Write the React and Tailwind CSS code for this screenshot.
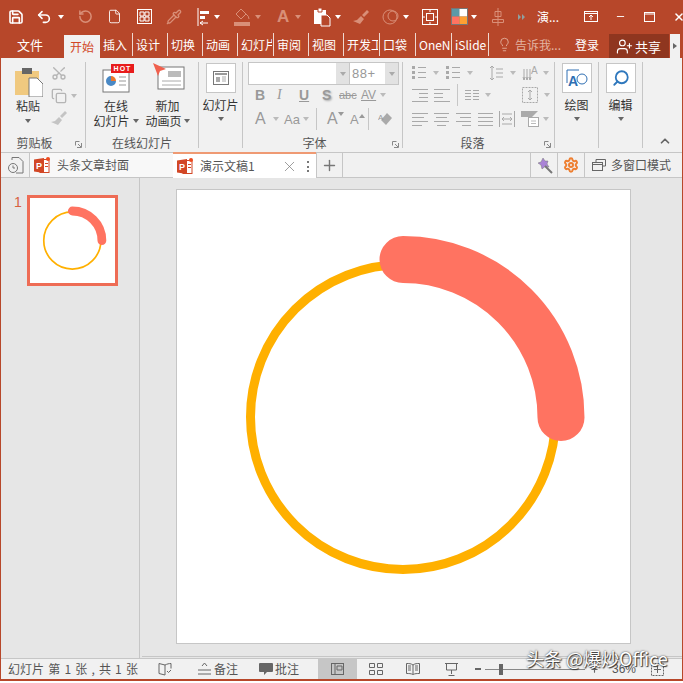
import { Save, Undo2, RotateCw, File, Pipette, X, Plus, Minus, Lightbulb, UserPlus, ChevronUp, Settings, Copy, Scissors, Search } from "lucide-react";

const tabs = [
  ["插入", 33], ["设计", 35], ["切换", 35], ["动画", 35], ["幻灯片", 36], ["审阅", 35], ["视图", 35],
  ["开发工具", 36], ["口袋", 36], ["OneNote", 36], ["iSlide", 37],
];

function Caret({ color = "#fff", className = "" }) {
  return (
    <svg width="6" height="4" viewBox="0 0 6 4" className={`shrink-0 ${className}`}>
      <path d="M0 0h6L3 4z" fill={color} />
    </svg>
  );
}

function Gap({ w }) {
  return <div className="shrink-0" style={{ width: w }} />;
}

// grey stacked lines used all over the paragraph group
function Lines({ rows, w = 16, color = "#a9a9a9", dots = false }) {
  const h = 16;
  return (
    <svg width={w} height={h} viewBox={`0 0 ${w} ${h}`} className="shrink-0">
      {rows.map((r, i) => (
        <g key={i}>
          {dots && <rect x="0" y={r[0] - 1} width="3" height="3" fill={color} />}
          <rect x={r[1]} y={r[0]} width={r[2]} height="1" fill={color} />
        </g>
      ))}
    </svg>
  );
}

function PptLogo() {
  return (
    <svg width="17" height="17" viewBox="0 0 17 17" className="shrink-0">
      <rect x="6" y="2.500" width="9" height="13" fill="#fff" stroke="#d24726" />
      <path d="M0 2.500 10 1v15L0 14.500z" fill="#d24726" />
      <text x="2" y="12" fontSize="9" fontWeight="700" fill="#fff" fontFamily="Liberation Sans">P</text>
      <rect x="11" y="6" width="3" height="1" fill="#d24726" />
      <rect x="11" y="9" width="3" height="1" fill="#d24726" />
      <circle cx="14" cy="2" r="2" fill="#ee4b1f" />
    </svg>
  );
}

function Arcs({ size }) {
  return (
    <svg width={size} height={size} viewBox="0 0 454 454" className="block">
      <circle cx="226" cy="227" r="152.500" fill="none" stroke="#ffb000" strokeWidth="9" />
      <path d="M226 69.500A158 158 0 0 1 384 227.500" fill="none" stroke="#ff7361" strokeWidth="47" strokeLinecap="round" />
    </svg>
  );
}

function TitleBar() {
  return (
    <div className="h-[33px] -mr-[1px] overflow-hidden flex items-center text-white">
      <Gap w={7} />
      <Save size={16} strokeWidth={2.4} className="shrink-0" />
      <Gap w={12} />
      <Undo2 size={16} strokeWidth={2.4} className="shrink-0" />
      <Caret className="ml-[6px]" />
      <Gap w={14} />
      <RotateCw size={15} strokeWidth={2.4} className="shrink-0 text-[#d98f78] -scale-x-100" />
      <Gap w={14} />
      <File size={15} strokeWidth={1.4} className="shrink-0" />
      <Gap w={15} />
      <svg width="15" height="15" viewBox="0 0 15 15" className="shrink-0" fill="none" stroke="#fff">
        <rect x=".5" y=".5" width="14" height="14" />
        <path d="M3 3h4v4H3zM8 3h4v4H8zM3 8h4v4H3zM8 8h4v4H8z" />
      </svg>
      <Gap w={14} />
      <Pipette size={16} className="shrink-0 text-[#d98f78]" />
      <Gap w={15} />
      <svg width="14" height="18" viewBox="0 0 14 18" className="shrink-0">
        <path d="M1 0v18" stroke="#fff" />
        <path d="M3 3h9v3H3zM3 8h5v3H3z" fill="#fff" />
        <path d="M3 15h8M3 15l3-2M3 15l3 2" stroke="#fff" fill="none" />
      </svg>
      <Caret className="ml-[3px]" />
      <Gap w={14} />
      <svg width="17" height="18" viewBox="0 0 17 18" className="shrink-0" fill="#d98f78">
        <path d="M7 1 12 6 7 11 2 6z" fill="none" stroke="#d98f78" />
        <path d="M12 6q3 2 3 5" fill="none" stroke="#d98f78" />
        <rect x="0" y="14" width="16" height="4" />
      </svg>
      <Caret color="#d98f78" className="ml-[4px]" />
      <Gap w={16} />
      <span className="shrink-0 w-[12px] text-[17px] leading-none font-bold font-['Liberation_Sans',sans-serif] text-[#d98f78]">A</span>
      <Caret color="#d98f78" className="ml-[6px]" />
      <Gap w={13} />
      <svg width="17" height="20" viewBox="0 0 17 20" className="shrink-0">
        <path d="M0 3h12v14H0z" fill="#fff" />
        <path d="M4 1h4v4H4z" fill="#fff" stroke="#b7472a" />
        <path d="M7 8h6l3 3v8H7z" fill="#b7472a" stroke="#fff" />
      </svg>
      <Caret className="ml-[4px]" />
      <Gap w={12} />
      <svg width="16" height="14" viewBox="0 0 16 14" className="shrink-0">
        <path d="M9 5 14 0l2 2-5 5zM8 6l3 3-4 5-7-3 4-1z" fill="#d98f78" />
      </svg>
      <Gap w={13} />
      <svg width="18" height="16" viewBox="0 0 18 16" className="shrink-0" fill="none" stroke="#d98f78">
        <circle cx="8" cy="8" r="7" />
        <circle cx="11" cy="7" r="5" />
      </svg>
      <Caret className="ml-[3px]" />
      <Gap w={13} />
      <svg width="16" height="16" viewBox="0 0 16 16" className="shrink-0" fill="none" stroke="#fff">
        <rect x=".5" y=".5" width="15" height="15" />
        <rect x="4.500" y="4.500" width="7" height="7" />
        <path d="M8 1v2M8 13v2M1 8h2M13 8h2" />
      </svg>
      <Gap w={13} />
      <svg width="17" height="17" viewBox="0 0 17 17" className="shrink-0">
        <rect width="17" height="17" fill="#777" />
        <rect x="1" y="1" width="7.500" height="7.500" fill="#5b9aa8" />
        <rect x="8.500" y="1" width="7.500" height="7.500" fill="#fff" />
        <rect x="1" y="8.500" width="7.500" height="7.500" fill="#ff7361" />
        <rect x="8.500" y="8.500" width="7.500" height="7.500" fill="#ffa033" />
      </svg>
      <Caret className="ml-[3px]" />
      <Gap w={15} />
      <svg width="12" height="18" viewBox="0 0 12 18" className="shrink-0" fill="none" stroke="#d98f78">
        <path d="M6 0v18M3 3.500h6v5H3zM.5 11.500h11v3H.5z" />
      </svg>
      <Gap w={14} />
      <svg width="8" height="6" viewBox="0 0 8 6" className="shrink-0"><path d="M0 0l3 3-3 3zM4 0l3 3-3 3z" fill="#8fa0a0" /></svg>
      <Gap w={11} />
      <span className="shrink-0 text-[12px] font-['Noto_Sans_CJK_SC',sans-serif] whitespace-nowrap w-[30px]">演...</span>
      <Gap w={17} />
      <svg width="14" height="11" viewBox="0 0 14 11" className="shrink-0" fill="none" stroke="#fff">
        <rect x=".5" y=".5" width="13" height="10" />
        <path d="M.5 2.500h13M7 9V4M5 6l2-2 2 2" />
      </svg>
      <Gap w={17} />
      <Minus size={11} strokeWidth={2} className="shrink-0" />
      <Gap w={18} />
      <svg width="11" height="10" viewBox="0 0 11 10" className="shrink-0" fill="none" stroke="#fff">
        <rect x=".5" y=".5" width="10" height="9" />
        <path d="M0 2h11" />
      </svg>
      <Gap w={18} />
      <X size={12} strokeWidth={3} className="shrink-0" />
    </div>
  );
}

function TabRow() {
  return (
    <div className="h-[25px] flex items-end text-white text-[12px] leading-none font-['Noto_Sans_CJK_SC',sans-serif]">
      <div className="shrink-0 w-[63px] h-[25px] pl-[16px] pb-[2px] flex items-center text-[13px]">文件</div>
      <div className="shrink-0 w-[36px] h-[23px] bg-[#f1f1f1] text-[#d24726] flex items-center justify-center">开始</div>
      <div className="shrink-0 flex h-[25px] pb-[2px]">
        {tabs.map(([name, w]) => (
          <div key={name} style={{ width: w }} className="h-[23px] pl-[3px] pr-[1px] border-r border-[#efd8d0] flex items-center overflow-hidden whitespace-nowrap">
            <span className="block overflow-hidden w-full">{name}</span>
          </div>
        ))}
      </div>
      <div className="shrink-0 w-[74px] h-[25px] pb-[2px] flex items-center pl-[8px] text-[#e3b3a1] overflow-hidden">
        <Lightbulb size={15} strokeWidth={1.4} className="shrink-0" />
        <span className="ml-[3px] whitespace-nowrap">告诉我...</span>
      </div>
      <div className="shrink-0 h-[25px] pb-[2px] flex items-center w-[46px] pl-[12px] whitespace-nowrap">登录</div>
      <div className="shrink-0 h-[24px] w-[60px] bg-[#8f361f] flex items-center pl-[7px] gap-[2px] whitespace-nowrap">
        <UserPlus size={17} strokeWidth={1.6} className="shrink-0" />
        <span className="text-[13px]">共享</span>
      </div>
      <div className="shrink-0 h-[24px] w-[10px] ml-[1px] bg-[#f1f1f1] flex items-center justify-center">
        <span className="border-l-[4px] border-y-[3px] border-y-transparent border-l-[#666]" />
      </div>
    </div>
  );
}

function Group({ w, label, labelPr = 0, launcher, children }) {
  return (
    <div style={{ width: w }} className="shrink-0 relative flex flex-col h-[86px] border-r border-[#c6c6c6]">
      <div className="flex-1 min-h-0 flex">{children}</div>
      <div style={{ paddingRight: labelPr }} className="h-[16px] -mb-[3px] text-center text-[12px] leading-[16px] text-[#555] font-['Noto_Sans_CJK_SC',sans-serif]">{label}</div>
      {launcher && (
        <svg width="7" height="7" viewBox="0 0 7 7" className="absolute right-[3px] bottom-[0px]" fill="none" stroke="#888">
          <path d="M.5 .5h4M.5 .5v4M6.500 2v4.500H2M3 3l3 3" />
        </svg>
      )}
    </div>
  );
}

function RibbonLabel({ children }) {
  return <div className="text-[12px] leading-[15px] text-[#333] text-center whitespace-nowrap font-['Noto_Sans_CJK_SC',sans-serif]">{children}</div>;
}

function FontGroup() {
  const gray = "shrink-0 text-[#999] font-['Liberation_Sans',sans-serif] leading-none";
  return (
    <div className="pl-[5px] w-full">
      <div className="flex w-[151px] h-[23px] border border-[#c6c6c6]">
        <div className="w-[87px] bg-white" />
        <div className="w-[13px] bg-[#e2e2e2] flex items-center justify-center"><Caret color="#aaa" /></div>
        <div className="w-[1px] bg-[#c6c6c6]" />
        <div className="w-[35px] bg-white text-[13px] tracking-[0.5px] leading-[21px] pl-[2px] text-[#999] font-['Liberation_Sans',sans-serif]">88+</div>
        <div className="flex-1 bg-[#e2e2e2] flex items-center justify-center"><Caret color="#aaa" /></div>
      </div>
      <div className="flex items-center h-[20px] pl-[7px]">
        <span className={`w-[22px] text-[14px] font-bold ${gray}`}>B</span>
        <span className="shrink-0 w-[22px] text-[14px] leading-none italic font-['Liberation_Serif',serif] text-[#999]">I</span>
        <span className={`w-[23px] text-[14px] underline font-bold ${gray}`}>U</span>
        <span className={`w-[17px] text-[14px] font-bold [text-shadow:1px_1px_2px_#aaa] ${gray}`}>S</span>
        <span className={`w-[22px] text-[11px] line-through ${gray}`}>abc</span>
        <span className={`w-[19px] text-[12px] underline ${gray}`}>AV</span>
        <Caret color="#bbb" />
      </div>
      <div className="flex items-center h-[28px] pl-[7px]">
        <span className={`w-[18px] text-[16px] ${gray}`}>A</span>
        <Caret color="#bbb" />
        <span className={`w-[19px] ml-[5px] text-[13px] ${gray}`}>Aa</span>
        <Caret color="#bbb" />
        <div className="shrink-0 w-[1px] h-[22px] bg-[#c6c6c6] ml-[7px]" />
        <div className={`flex items-start w-[23px] ml-[10px] text-[16px] ${gray}`}>A<Caret color="#999" className="mt-[1px]" /></div>
        <div className={`flex items-start w-[18px] text-[13px] ${gray}`}>A<Caret color="#999" className="rotate-180 mt-[1px]" /></div>
        <div className="shrink-0 w-[1px] h-[22px] bg-[#c6c6c6]" />
        <svg width="15" height="14" viewBox="0 0 15 14" className="ml-[9px] shrink-0">
          <path d="M9 1l5 5-6 7-5-5z" fill="#aaa" />
          <text x="0" y="8" fontSize="8" fill="#999" fontFamily="Liberation Sans">A</text>
        </svg>
      </div>
    </div>
  );
}

function ParaCell({ w, children, caret, gap = 7 }) {
  return (
    <div style={{ width: w, gap }} className="shrink-0 flex items-center justify-start">
      {children}
      {caret && <Caret color="#bbb" />}
    </div>
  );
}

function ParagraphGroup() {
  const even = [[2, 0, 16], [6, 0, 12], [10, 0, 16], [14, 0, 10]];
  const center = [[2, 0, 15], [6, 2, 11], [10, 0, 15], [14, 3, 9]];
  const right = [[2, 0, 15], [6, 4, 11], [10, 0, 15], [14, 6, 9]];
  const full = [[2, 0, 16], [6, 0, 16], [10, 0, 16], [14, 0, 16]];
  const list = [[2, 6, 8], [7, 6, 8], [12, 6, 8]];
  return (
    <div className="pl-[9px] w-full flex flex-col">
      <div className="flex h-[22px]">
        <ParaCell w={34} caret><Lines dots w={14} rows={list} /></ParaCell>
        <ParaCell w={43} caret><Lines dots w={14} rows={list} /></ParaCell>
        <ParaCell w={33} caret>
          <svg width="14" height="16" viewBox="0 0 14 16" fill="none" stroke="#a9a9a9" className="shrink-0">
            <path d="M3 1v14M1 3l2-2 2 2M1 13l2 2 2-2M7 4h7M7 8h7M7 12h7" />
          </svg>
        </ParaCell>
        <ParaCell w={30} caret gap={5}>
          <svg width="16" height="16" viewBox="0 0 16 16" fill="none" stroke="#a9a9a9" className="shrink-0">
            <path d="M2 4v11M5 4v11M8 4v11M1 12l1 3 1-3M4 12l1 3 1-3M7 12l1 3 1-3" />
            <text x="9" y="9" fontSize="10" fill="#a9a9a9" stroke="none" fontFamily="Liberation Sans">A</text>
          </svg>
        </ParaCell>
      </div>
      <div className="flex h-[22px]">
        <ParaCell w={22}><Lines rows={[[2, 0, 16], [6, 7, 9], [10, 7, 9], [14, 0, 16]]} /></ParaCell>
        <ParaCell w={23}><Lines rows={[[2, 0, 16], [6, 0, 9], [10, 0, 9], [14, 0, 16]]} /></ParaCell>
        <div className="shrink-0 w-[1px] h-[22px] bg-[#c6c6c6] mr-[7px]" />
        <ParaCell w={57} caret gap={6}>
          <Lines w={14} rows={[[3, 0, 6], [6, 0, 6], [9, 0, 6], [12, 0, 6], [3, 8, 6], [6, 8, 6], [9, 8, 6], [12, 8, 6]]} />
        </ParaCell>
        <ParaCell w={30} caret gap={6}>
          <svg width="16" height="16" viewBox="0 0 16 16" fill="none" stroke="#a9a9a9" strokeDasharray="2 1" className="shrink-0">
            <rect x=".5" y=".5" width="15" height="15" />
            <path d="M8 3v10M6 5l2-2 2 2M6 11l2 2 2-2" strokeDasharray="none" />
          </svg>
        </ParaCell>
      </div>
      <div className="flex h-[26px]">
        <ParaCell w={22}><Lines rows={even} /></ParaCell>
        <ParaCell w={22}><Lines rows={center} w={15} /></ParaCell>
        <ParaCell w={22}><Lines rows={right} w={15} /></ParaCell>
        <ParaCell w={21}><Lines rows={full} w={15} /></ParaCell>
        <ParaCell w={22}>
          <svg width="16" height="16" viewBox="0 0 16 16" fill="none" stroke="#a9a9a9" className="shrink-0">
            <path d="M.5 0v16M15.500 0v16M3 3h10M3 13h10M3 8h10M3 8l2-2M3 8l2 2M13 8l-2-2M13 8l-2 2" />
          </svg>
        </ParaCell>
        <ParaCell w={30} caret gap={3}>
          <svg width="19" height="16" viewBox="0 0 19 16" className="shrink-0">
            <path d="M0 0h17l-6 6H0z" fill="#aaa" />
            <rect x="7.500" y="6.500" width="10" height="9" fill="#fff" stroke="#aaa" />
            <path d="M10 10h5M10 12.500h5" stroke="#bbb" />
          </svg>
        </ParaCell>
      </div>
    </div>
  );
}

function BigButton({ label, children }) {
  return (
    <div className="w-full flex flex-col items-center pt-[1px]">
      <div className="w-[30px] h-[30px] border border-[#c6c6c6] bg-white flex items-center justify-center">{children}</div>
      <div className="mt-[4px]"><RibbonLabel>{label}</RibbonLabel></div>
      <Caret color="#666" className="mt-[5px]" />
    </div>
  );
}

function Ribbon() {
  return (
    <div className="h-[94px] bg-[#f1f1f1] flex items-start pt-[4px] pl-[1px]">
      <Group w={84} label="剪贴板" labelPr={18} launcher>
        <div className="w-[52px] shrink-0 flex flex-col items-center pt-[5px]">
          <svg width="29" height="30" viewBox="0 0 29 30" className="shrink-0">
            <path d="M1 4h24v24H1z" fill="#f0c97f" />
            <rect x="8" y="1" width="10" height="6" fill="#666" />
            <path d="M15 11h8l6 6v13H15z" fill="#fff" stroke="#777" />
          </svg>
          <div className="mt-[1px]"><RibbonLabel>粘贴</RibbonLabel></div>
          <Caret color="#666" className="mt-[6px]" />
        </div>
        <div className="-ml-[3px] flex flex-col pt-[3px] gap-[7px] text-[#b5b5b5]">
          <Scissors size={16} className="-rotate-90" />
          <div className="flex items-center gap-[4px]"><Copy size={16} /><Caret color="#bbb" /></div>
          <svg width="16" height="14" viewBox="0 0 16 14"><path d="M9 5 14 0l2 2-5 5zM8 6l3 3-4 5-7-3 4-1z" fill="#c4c4c4" /></svg>
        </div>
      </Group>
      <Group w={113} label="在线幻灯片">
        <div className="w-[60px] shrink-0 flex flex-col items-center pt-[1px]">
          <div className="relative w-[28px] h-[30px] mt-[1px]">
            <svg width="28" height="30" viewBox="0 0 28 30" className="block">
              <rect x="1" y="6" width="26" height="22" fill="#fff" stroke="#777" />
              <path d="M9 12a5 5 0 1 0 5 5h-5z" fill="#4a89c5" />
              <path d="M9 12a5 5 0 0 1 5 5H9z" fill="#e9772e" />
              <path d="M17 13h7M17 17h7M17 21h7" stroke="#999" />
            </svg>
            <span className="absolute -right-[4px] top-0 h-[9px] w-[23px] bg-[#e81c1c] text-white text-[7px] leading-[9px] text-center font-bold tracking-[1px] font-['Liberation_Sans',sans-serif]">HOT</span>
          </div>
          <div className="mt-[4px]">
            <RibbonLabel>在线</RibbonLabel>
            <div className="flex items-center gap-[3px]"><RibbonLabel>幻灯片</RibbonLabel><Caret color="#666" /></div>
          </div>
        </div>
        <div className="w-[53px] shrink-0 -ml-[5px] flex flex-col items-center pt-[1px]">
          <svg width="32" height="31" viewBox="0 0 32 31" className="ml-[2px]">
            <rect x="5" y="4" width="26" height="22" fill="#fff" stroke="#777" />
            <rect x="15" y="8" width="13" height="6" fill="#bbb" />
            <path d="M9 18h19M9 22h19" stroke="#aaa" />
            <path d="M0 0 13 6 7 8 5 13z" fill="#f0604d" />
          </svg>
          <div className="mt-[4px]">
            <RibbonLabel>新加</RibbonLabel>
            <div className="flex items-center gap-[2px]"><RibbonLabel>动画页</RibbonLabel><Caret color="#666" /></div>
          </div>
        </div>
      </Group>
      <Group w={44} label="">
        <BigButton label="幻灯片">
          <svg width="16" height="14" viewBox="0 0 16 14"><rect x=".5" y=".5" width="15" height="13" fill="#fff" stroke="#777" /><path d="M2 2h12v2H2z" fill="#999" /><path d="M3 6h4v5H3z" fill="#aaa" /><path d="M9 6h4M9 8h4M9 10h4" stroke="#aaa" /></svg>
        </BigButton>
      </Group>
      <Group w={160} label="字体" labelPr={16} launcher><FontGroup /></Group>
      <Group w={152} label="段落" labelPr={12} launcher><ParagraphGroup /></Group>
      <Group w={44} label="">
        <BigButton label="绘图">
          <svg width="22" height="20" viewBox="0 0 22 20" fill="none">
            <path d="M1 15V2h12" stroke="#2f6fb3" />
            <text x="2" y="18" fontSize="14" fontWeight="700" fill="#2f6fb3" fontFamily="Liberation Sans">A</text>
            <circle cx="16" cy="11" r="5" stroke="#2f6fb3" />
          </svg>
        </BigButton>
      </Group>
      <Group w={44} label="">
        <BigButton label="编辑">
          <Search size={18} strokeWidth={2.4} className="text-[#2f78bd] -scale-x-100" />
        </BigButton>
      </Group>
      <div className="flex-1 h-[86px] flex items-end justify-end pr-[10px]">
        <ChevronUp size={14} strokeWidth={3} className="text-[#666]" />
      </div>
    </div>
  );
}

function DocTabs() {
  return (
    <div className="h-[26px] bg-[#f1f1f1] border-y border-[#c6c6c6] flex text-[12px] text-[#555] font-['Noto_Sans_CJK_SC',sans-serif] leading-none">
      <div className="shrink-0 w-[29px] border-r border-[#c6c6c6] flex items-center justify-center pl-[2px]">
        <svg width="16" height="17" viewBox="0 0 16 17" fill="none" stroke="#777">
          <path d="M4 3V.5h7l4 4V16H8" />
          <circle cx="5" cy="11" r="4.500" fill="#f1f1f1" />
          <path d="M5 8.500V11h2" />
        </svg>
      </div>
      <div className="shrink-0 w-[143px] bg-[#f8f8f8] flex items-center pl-[4px] gap-[5px] whitespace-nowrap">
        <PptLogo />
        <span className="ml-[1px]">头条文章封面</span>
      </div>
      <div className="shrink-0 w-[143px] bg-white border-t-2 border-[#ef9a73] -mt-[1px] h-[26px] flex items-center pl-[4px] gap-[5px] whitespace-nowrap">
        <PptLogo />
        <span className="w-[76px] ml-[1px]">演示文稿1</span>
        <X size={17} strokeWidth={1} className="text-[#777] shrink-0" />
        <span className="ml-[4px] w-[2px] h-[11px] border-l-2 border-dotted border-[#777]" />
      </div>
      <div className="shrink-0 w-[27px] border-x border-[#c6c6c6] flex items-center justify-center">
        <Plus size={17} strokeWidth={2} className="text-[#777]" />
      </div>
      <div className="flex-1" />
      <div className="shrink-0 w-[27px] border-l border-[#c6c6c6] flex items-center justify-center">
        <svg width="17" height="17" viewBox="0 0 17 17">
          <path d="M7 1l2 3 3 0-1 3 2 3-4-.5L6 12 5 8 2 6l3-1z" fill="#a983d6" stroke="#777" strokeWidth=".5" />
          <path d="M9 9l7 7" stroke="#777" strokeWidth="2" />
        </svg>
      </div>
      <div className="shrink-0 w-[27px] border-l border-[#c6c6c6] flex items-center justify-center">
        <Settings size={16} strokeWidth={3} className="text-[#ee7f31]" />
      </div>
      <div className="shrink-0 w-[98px] border-l border-[#c6c6c6] flex items-center pl-[7px] gap-[5px] whitespace-nowrap">
        <svg width="14" height="12" viewBox="0 0 14 12" fill="none" stroke="#666" className="shrink-0">
          <path d="M4 3V.5h9.500V7H10" />
          <rect x=".5" y="3.500" width="10" height="8" />
          <path d="M.5 5.500h10" />
        </svg>
        <span>多窗口模式</span>
      </div>
    </div>
  );
}

function StatusBar() {
  return (
    <div className="h-[21px] border-t border-[#c6c6c6] bg-[#f1f1f1] flex items-center text-[12px] leading-none text-[#555] font-['Noto_Sans_CJK_SC',sans-serif] whitespace-nowrap">
      <span className="shrink-0 w-[157px] pl-[7px] [word-spacing:1.500px]">幻灯片 第 1 张 , 共 1 张</span>
      <svg width="14" height="13" viewBox="0 0 14 13" fill="none" stroke="#666" className="shrink-0">
        <path d="M7 2 1 .5v10L7 12V2c2-1 4-1.500 6-1.500v5M9 8l1.500 1.500L13 7" />
      </svg>
      <Gap w={26} />
      <svg width="13" height="12" viewBox="0 0 13 12" fill="none" stroke="#666" className="shrink-0">
        <path d="M4 3l2.500-3L9 3M0 7h13M0 11h13" />
      </svg>
      <span className="shrink-0 ml-[3px] w-[45px]">备注</span>
      <svg width="14" height="13" viewBox="0 0 14 13" className="shrink-0"><path d="M1 0h12a1 1 0 0 1 1 1v7a1 1 0 0 1-1 1H8l-3 3V9H1a1 1 0 0 1-1-1V1a1 1 0 0 1 1-1z" fill="#666" /></svg>
      <span className="shrink-0 ml-[2px] w-[43px]">批注</span>
      <div className="shrink-0 w-[39px] h-[20px] bg-[#c6c6c6] flex items-center justify-center">
        <svg width="13" height="12" viewBox="0 0 13 12" fill="none" stroke="#666"><rect x=".5" y=".5" width="12" height="11" /><path d="M4 .5v11M6 3h5v4H6z" /></svg>
      </div>
      <div className="shrink-0 w-[37px] flex justify-center">
        <svg width="14" height="12" viewBox="0 0 14 12" fill="none" stroke="#666"><path d="M.5.5h5v4h-5zM8.500.5h5v4h-5zM.5 7.500h5v4h-5zM8.500 7.500h5v4h-5z" /></svg>
      </div>
      <div className="shrink-0 w-[38px] flex justify-center">
        <svg width="14" height="12" viewBox="0 0 14 12" fill="none" stroke="#666"><path d="M7 2C5 .5 3 .5.500.5v10c2.500 0 4.500 0 6.500 1 2-1 4-1 6.500-1V.5C11 .5 9 .5 7 2zM7 2v9M2 3h3M2 5h3M2 7h3M9 3h3M9 5h3M9 7h3" /></svg>
      </div>
      <div className="shrink-0 w-[38px] flex justify-center">
        <svg width="13" height="13" viewBox="0 0 13 13" fill="none" stroke="#666"><path d="M0 .5h13M1.500 1v6h10V1M6.500 7v4M3.500 12.500h6" /></svg>
      </div>
      <Gap w={5} />
      <div className="shrink-0 w-[6px] h-[2px] bg-[#666]" />
      <div className="shrink-0 ml-[4px] w-[100px] flex items-center">
        <div className="w-[14px] h-[1px] bg-[#888]" />
        <div className="w-[4px] h-[11px] bg-[#666]" />
        <div className="flex-1 h-[1px] bg-[#888]" />
      </div>
      <Plus size={9} strokeWidth={3} className="shrink-0 ml-[5px] text-[#666]" />
      <span className="shrink-0 ml-[13px] w-[35px] font-['Liberation_Sans',sans-serif] text-[12px]">36%</span>
      <svg width="13" height="13" viewBox="0 0 13 13" fill="none" stroke="#666" className="ml-[4px] shrink-0" strokeDasharray="2 1">
        <rect x=".5" y=".5" width="12" height="12" />
        <path d="M6.500 3v7M3 6.500h7" strokeDasharray="none" />
      </svg>
    </div>
  );
}

export default function App() {
  return (
    <div className="relative w-[683px] h-[683px] overflow-hidden bg-white">
      <div className="h-[681px] flex flex-col bg-[#b7472a] px-[1px] pb-[2px]">
        <TitleBar />
        <TabRow />
        <Ribbon />
        <DocTabs />
        <div className="flex-1 min-h-0 flex bg-[#e6e6e6]">
          <div className="shrink-0 w-[139px] border-r border-[#c6c6c6] flex items-start pt-[17px] pl-[13px]">
            <span className="w-[13px] text-[14px] leading-none text-[#d8623f] font-['Liberation_Sans',sans-serif]">1</span>
            <div className="w-[91px] h-[91px] border-[3px] border-[#ee6c55] bg-white flex items-center justify-center">
              <Arcs size={85} />
            </div>
          </div>
          <div className="flex-1 flex flex-col pl-[37px] pt-[12px]">
            <div className="w-[453px] h-[453px] bg-white border border-[#c6c6c6] box-content -ml-[1px] -mt-[1px] overflow-hidden">
              <Arcs size={454} />
            </div>
            <div className="mt-auto -ml-[35px] h-[2px] border-t border-[#c6c6c6]" />
          </div>
        </div>
        <StatusBar />
      </div>
      <span className="absolute left-[526px] top-[645px] text-[18px] leading-[26px] text-white whitespace-nowrap [text-shadow:0_0_2px_#333,1px_1px_1px_#333] font-['Noto_Sans_CJK_SC',sans-serif]">头条 @爆炒Office</span>
    </div>
  );
}
